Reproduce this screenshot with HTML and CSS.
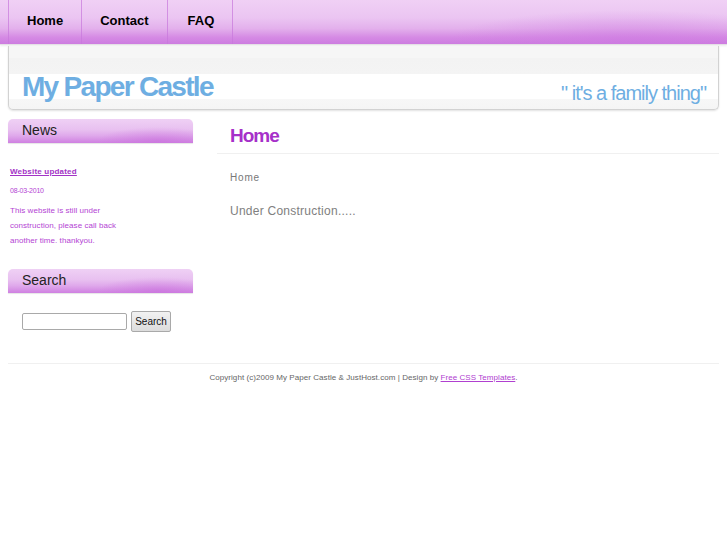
FILE: index.html
```html
<!DOCTYPE html>
<html>
<head>
<meta charset="utf-8">
<title>My Paper Castle</title>
<link rel="stylesheet" href="styles.css">
</head>
<body>
<div class="menu">
  <ul class="menu-list">
    <li class="menu-item"><a href="#">Home</a></li>
    <li class="menu-item"><a href="#">Contact</a></li>
    <li class="menu-item"><a href="#">FAQ</a></li>
  </ul>
</div>
<div class="header">
  <h1 class="logo">My Paper Castle</h1>
  <p class="slogan">" it's a family thing"</p>
</div>
<div class="page">
  <div class="sidebar">
    <div class="box">
      <h2 class="box-title">News</h2>
      <div class="box-body news">
        <h3 class="news-title"><a href="#">Website updated</a></h3>
        <p class="news-date">08-03-2010</p>
        <p class="news-text">This website is still under construction, please call back another time. thankyou.</p>
      </div>
    </div>
    <div class="box">
      <h2 class="box-title">Search</h2>
      <form class="search">
        <input type="text" class="search-input">
        <button type="button" class="search-btn">Search</button>
      </form>
    </div>
  </div>
  <div class="content">
    <h2 class="content-title">Home</h2>
    <p class="crumb">Home</p>
    <p class="content-text">Under Construction.....</p>
  </div>
</div>
<div class="footer">
  <p>Copyright (c)2009 My Paper Castle &amp; JustHost.com | Design by <a href="#">Free CSS Templates</a>.</p>
</div>
</body>
</html>
```
FILE: styles.css
```css
html, body {
  margin: 0;
  padding: 0;
  background: #fff;
  font-family: "Liberation Sans", Arial, sans-serif;
}

.menu {
  height: 44px;
  background:
    radial-gradient(ellipse 180px 30px at 630px 40px, rgba(205,120,225,0.55), rgba(205,120,225,0) 100%),
    linear-gradient(to bottom, #f0d0f5 0%, #ebc5f2 40%, #e3b0ec 65%, #d58ae4 85%, #cd7ce0 100%);
  border-bottom: 1px solid #e4e0e6;
  box-shadow: 0 1px 2px rgba(0,0,0,0.08);
}

.menu-list {
  list-style: none;
  margin: 0;
  padding: 0 0 0 8px;
  display: flex;
  height: 44px;
}

.menu-item {
  border-right: 1px solid rgba(200, 120, 220, 0.7);
  display: flex;
  align-items: center;
}

.menu-item:first-child {
  border-left: 1px solid rgba(200, 120, 220, 0.7);
}

.menu-item a {
  display: block;
  padding: 0 18px 4px;
  font-size: 13px;
  font-weight: bold;
  color: #000;
  text-decoration: none;
}

.menu-item:last-child a {
  padding-left: 20px;
}

.header {
  margin: 1px 8px 0;
  height: 64px;
  box-sizing: border-box;
  border: 1px solid #d2d2d2;
  border-top: none;
  border-radius: 0 0 5px 5px;
  background: linear-gradient(to bottom, #f6f6f6 0px, #f6f6f6 12px, #f3f3f3 12px, #f4f4f4 28px, #ffffff 28px, #ffffff 53px, #f7f7f7 53px, #f5f5f5 100%);
  box-shadow: 0 1px 2px rgba(0,0,0,0.12);
  display: flex;
  justify-content: space-between;
  align-items: flex-start;
  padding: 0 12px 0 13px;
}

.logo {
  margin: 25px 0 0;
  font-size: 28px;
  line-height: 32px;
  font-weight: bold;
  letter-spacing: -1.7px;
  color: #6eaee2;
}

.slogan {
  margin: 36px 0 0;
  font-size: 20px;
  line-height: 23px;
  letter-spacing: -1px;
  color: #6eaee2;
}

.page {
  display: flex;
  margin: 9px 8px 0;
}

.sidebar {
  width: 185px;
  flex: none;
}

.box-title {
  margin: 0;
  height: 24px;
  line-height: 23px;
  padding-left: 14px;
  font-size: 14px;
  font-weight: normal;
  color: #222;
  border-radius: 5px 5px 0 0;
  background:
    radial-gradient(ellipse 60px 14px at 150px 22px, rgba(200,110,220,0.55), rgba(200,110,220,0) 100%),
    linear-gradient(to bottom, #efd0f5 0%, #e8c0f0 45%, #dfa8eb 70%, #cf80e1 100%);
  box-shadow: 0 1px 1px rgba(0,0,0,0.1);
}

.news {
  padding: 22px 2px 21px;
}

.news-title {
  margin: 0;
  font-size: 8px;
  letter-spacing: 0.2px;
  line-height: 14px;
  font-weight: bold;
}

.news-title a {
  color: #a233c6;
}

.news-date {
  margin: 5px 0 0;
  font-size: 7px;
  letter-spacing: -0.2px;
  line-height: 14px;
  color: #b444d4;
}

.news-text {
  margin: 5px 0 0;
  font-size: 8px;
  letter-spacing: 0.05px;
  line-height: 15px;
  color: #b444d4;
  width: 118px;
}

.search {
  display: flex;
  align-items: center;
  gap: 4px;
  padding: 18px 0 0 14px;
}

.search-input {
  width: 105px;
  height: 17px;
  box-sizing: border-box;
  border: 1px solid #a9a9a9;
  border-radius: 2px;
  padding: 0;
  background: #fff;
  margin: 0;
}

.search-btn {
  height: 21px;
  width: 40px;
  padding: 0;
  font-family: "Liberation Sans", Arial, sans-serif;
  font-size: 10px;
  color: #111;
  border: 1px solid #a9a9a9;
  border-radius: 2px;
  background: linear-gradient(to bottom, #f2f2f2, #dcdcdc);
  margin: 0;
}

.content {
  flex: 1;
  margin-left: 24px;
}

.content-title {
  margin: 0;
  padding: 6px 0 6px 13px;
  font-size: 19px;
  letter-spacing: -1px;
  font-weight: bold;
  color: #a630c9;
  border-bottom: 1px solid #f0f0f0;
}

.crumb {
  margin: 18px 0 0 13px;
  font-size: 10px;
  letter-spacing: 0.8px;
  color: #777;
}

.content-text {
  margin: 21px 0 0 13px;
  font-size: 12px;
  letter-spacing: 0.25px;
  color: #808080;
}

.footer {
  margin: 31px 8px 0;
  border-top: 1px solid #f0f0f0;
  text-align: center;
}

.footer p {
  margin: 9px 0 0;
  font-size: 8px;
  letter-spacing: 0.06px;
  color: #666;
}

.footer a {
  color: #b040d0;
}
```
